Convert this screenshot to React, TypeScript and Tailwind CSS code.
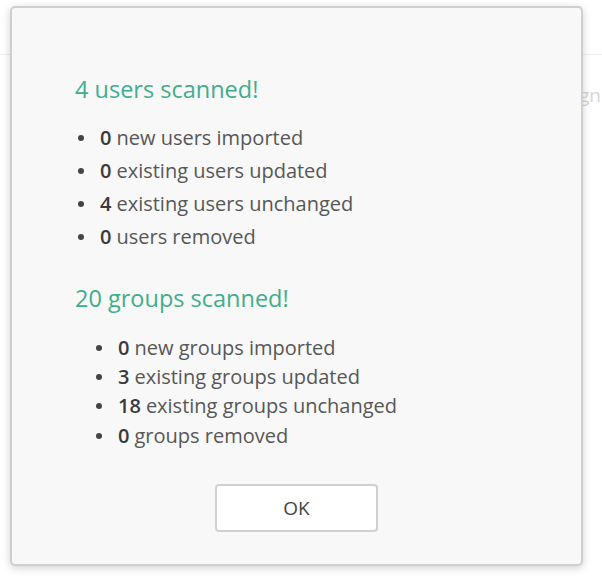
import React from 'react';

type Row = { n: number; label: string };

const users: Row[] = [
  { n: 0, label: 'new users imported' },
  { n: 0, label: 'existing users updated' },
  { n: 4, label: 'existing users unchanged' },
  { n: 0, label: 'users removed' },
];

const groups: Row[] = [
  { n: 0, label: 'new groups imported' },
  { n: 3, label: 'existing groups updated' },
  { n: 18, label: 'existing groups unchanged' },
  { n: 0, label: 'groups removed' },
];

const App: React.FC = () => {
  return (
    <div className="relative w-[602px] h-[577px] overflow-hidden bg-white font-['Open_Sans',sans-serif]">
      {/* page behind the dialog */}
      <div className="h-[55px] border-b border-[#ececec]" />
      <div className="flex justify-end pt-[26px] pr-[1px]">
        <span className="text-[19px] text-[#d6d6d6]">Assign</span>
      </div>

      {/* dialog */}
      <div className="absolute left-[10px] top-[6px] w-[573px] h-[560px] rounded-[5px] border-2 border-[#cfcfcf] bg-[#f8f8f8] shadow-[0_2px_8px_rgba(0,0,0,0.18)]">
        <div className="pl-[63px] pt-[64px]">
          <h2 className="text-[23.5px] leading-[34px] text-[#3fae8c]">4 users scanned!</h2>
          <ul className="mt-[15px] pl-[3px]">
            {users.map((r, i) => (
              <li key={i} className="flex items-center h-[33px] text-[20px] text-[#575757]">
                <span className="w-[6px] h-[6px] rounded-full bg-[#444] mr-[16px]" />
                <span className="font-semibold text-[#3a3a3a] mr-[5px]">{r.n}</span>
                {r.label}
              </li>
            ))}
          </ul>

          <h2 className="mt-[28px] text-[23.5px] leading-[34px] text-[#3fae8c]">20 groups scanned!</h2>
          <ul className="mt-[18px] pl-[21px]">
            {groups.map((r, i) => (
              <li key={i} className="flex items-center h-[29.3px] text-[20px] text-[#575757]">
                <span className="w-[6px] h-[6px] rounded-full bg-[#444] mr-[16px]" />
                <span className="font-semibold text-[#3a3a3a] mr-[5px]">{r.n}</span>
                {r.label}
              </li>
            ))}
          </ul>
        </div>

        <div className="absolute left-0 right-0 top-[476px] flex justify-center">
          <button className="w-[163px] h-[48px] rounded-[4px] border-2 border-[#d0d0d0] bg-white text-[19px] text-[#444]">
            OK
          </button>
        </div>
      </div>
    </div>
  );
};

export default App;
